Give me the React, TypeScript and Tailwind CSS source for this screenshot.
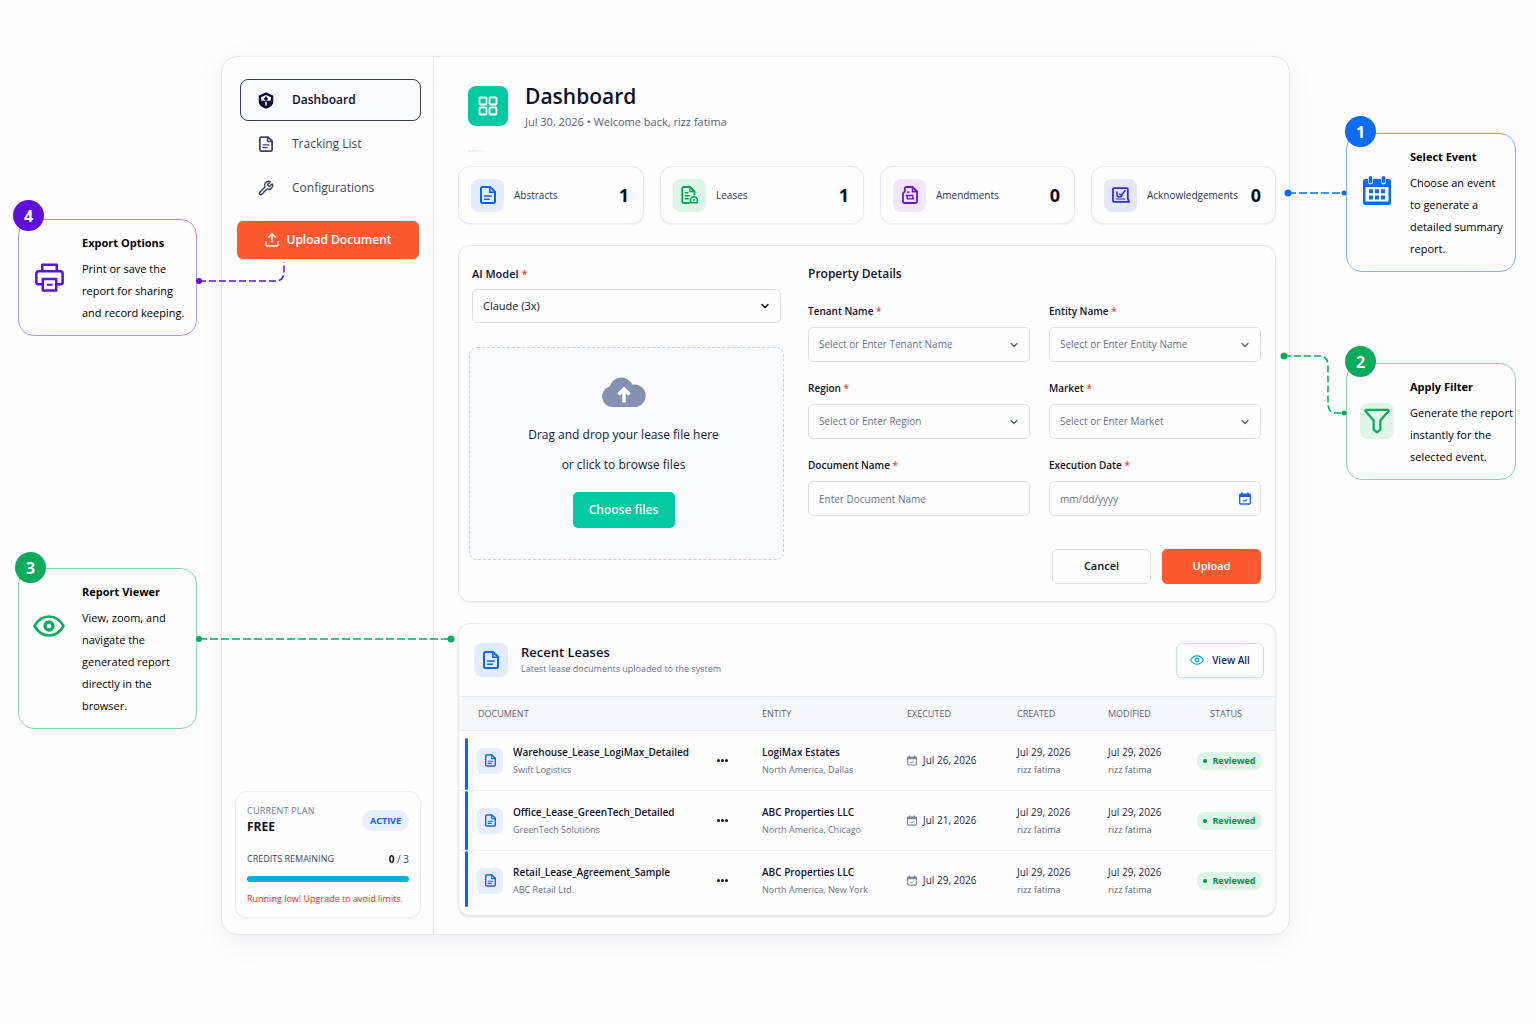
import {Fragment, useState} from "react";
import type {ReactNode} from "react";
import {ChevronDown, Upload, Wrench} from "lucide-react";
import clsx from "clsx";

type IconProps = {
  className?: string;
};

const DocIcon = ({className}: IconProps) => (
  <svg viewBox="0 0 16 18" fill="none" stroke="currentColor" strokeWidth="2" strokeLinejoin="round" strokeLinecap="round" className={className}>
    <path d="M2.500 1h7.600L15 5.800V15.500a1.500 1.500 0 0 1-1.500 1.500h-11A1.500 1.500 0 0 1 1 15.500v-13A1.500 1.500 0 0 1 2.500 1z" />
    <path d="M9.800 1.400v4.800h4.800" strokeWidth="1.600" />
    <path d="M4.600 10h6.600M4.600 13.200h4.600" strokeWidth="1.500" />
  </svg>
);

const ShieldIcon = ({className}: IconProps) => (
  <svg viewBox="0 0 16 17" className={className}>
    <path d="M8 1.100 14.700 4v5.200c0 3-2.600 5.500-6.700 6.900-4.100-1.400-6.700-3.900-6.700-6.900V4z" fill="currentColor" stroke="currentColor" strokeWidth="1.200" strokeLinejoin="round" />
    <path d="M3 5.200 8 2.900l5 2.300-.4 3.600H3.400z" fill="#fff" />
    <path d="M8 4.400v5.800M6.600 6.800 8 5.600l1.400 1.200-1.400 1.400z" stroke="currentColor" strokeWidth="1.200" fill="currentColor" />
    <path d="M8 9.800v3.800" stroke="#fff" strokeWidth="1.500" />
  </svg>
);

const GridIcon = ({className}: IconProps) => (
  <svg viewBox="0 0 20 20" fill="none" stroke="currentColor" strokeWidth="1.800" className={className}>
    <rect x="1.500" y="1.500" width="7" height="7" rx="1" />
    <rect x="11.500" y="1.500" width="7" height="7" rx="1" />
    <rect x="1.500" y="11.500" width="7" height="7" rx="1" />
    <rect x="11.500" y="11.500" width="7" height="7" rx="1" />
  </svg>
);

const LeaseIcon = ({className}: IconProps) => (
  <svg viewBox="0 0 18 18" fill="none" stroke="currentColor" strokeWidth="1.800" strokeLinejoin="round" strokeLinecap="round" className={className}>
    <path d="M8 17H2.500A1.200 1.200 0 0 1 1.300 15.800V2.200A1.200 1.200 0 0 1 2.500 1H9l4.500 4.500v3" />
    <path d="M9 1.500v4h4.300" strokeWidth="1.400" />
    <path d="M4.300 6.800h2.500M4.300 9.800h4M4.300 12.800h3" strokeWidth="1.500" />
    <path d="M9.500 16.800v-2.600a3.400 3.400 0 0 1 6.800 0v2.600z" strokeWidth="1.600" />
    <path d="M12.900 13.500v1.300" strokeWidth="1.500" />
  </svg>
);

const AmendmentIcon = ({className}: IconProps) => (
  <svg viewBox="0 0 16 18" fill="none" stroke="currentColor" strokeWidth="1.800" strokeLinejoin="round" strokeLinecap="round" className={className}>
    <path d="M4.500 1h6L15 5.500v10a1.500 1.500 0 0 1-1.500 1.500h-11A1.500 1.500 0 0 1 1 15.500V7.200L2.800 5.600V2.700A1.700 1.700 0 0 1 4.500 1z" />
    <path d="M10.400 1.500v4.200h4.200" strokeWidth="1.500" />
    <path d="M5.200 9.500h5.600v3.300H5.200zM4.300 9.500h.9M10.800 12.800h1M5.500 6.200h1.500" strokeWidth="1.300" />
  </svg>
);

const AckIcon = ({className}: IconProps) => (
  <svg viewBox="0 0 18 16" fill="none" stroke="currentColor" strokeWidth="1.800" strokeLinejoin="round" strokeLinecap="round" className={className}>
    <path d="M2 1.200h13a.8.800 0 0 1 .8.800v9.500l1.200 3.300H2a1 1 0 0 1-1-1V2.200a1 1 0 0 1 1-1z" />
    <path d="M5 5v2.500a2.500 2.500 0 0 0 5 0M7.500 7.200l1.800 1 3.700-4.500" strokeWidth="1.500" />
    <path d="M4 12h9" strokeWidth="1" />
  </svg>
);

const CloudIcon = ({className}: IconProps) => (
  <svg viewBox="0 0 44 31" className={className}>
    <path d="M10.500 31a10.400 10.400 0 0 1-2.800-20.400A12 12 0 0 1 30.300 8.600 11.300 11.300 0 1 1 32.700 31z" fill="#8490b0" />
    <path d="M22 26.500V14M16.500 18.500 22 13l5.500 5.500" fill="none" stroke="#fff" strokeWidth="3.600" />
  </svg>
);

const SmallCalendarIcon = ({className}: IconProps) => (
  <svg viewBox="0 0 12 13" className={className}>
    <path d="M1.600 2.200h8.800a.9.900 0 0 1 .9.900v8a.9.900 0 0 1-.9.900H1.600a.9.900 0 0 1-.9-.9v-8a.9.900 0 0 1 .9-.9z" fill="none" stroke="currentColor" strokeWidth="1.300" />
    <path d="M.7 2.200h10.600v2.900H.7zM2.300.5h1.600v2H2.300zM8.100.5h1.600v2H8.100z" fill="currentColor" />
    <path d="m3.800 8.600 1.700.6 2.800-1.600" fill="none" stroke="currentColor" strokeWidth="1.200" />
  </svg>
);

const BigCalendarIcon = ({className}: IconProps) => (
  <svg viewBox="0 0 28 30" className={className}>
    <path d="M2.500 3h23A2.500 2.500 0 0 1 28 5.500v21a2.500 2.500 0 0 1-2.500 2.500h-23A2.500 2.500 0 0 1 0 26.500v-21A2.500 2.500 0 0 1 2.500 3zM2.500 11v14.500h23V11z" fill="currentColor" fillRule="evenodd" />
    <path d="M7.500 3v3M20.500 3v3" stroke="#fff" strokeWidth="4.800" strokeLinecap="round" />
    <path d="M7.500 1.900V5.500M20.500 1.900V5.500" stroke="currentColor" strokeWidth="3.600" strokeLinecap="round" />
    <path d="M6 13.200h4v4H6zM12 13.200h4v4h-4zM18 13.200h4v4h-4zM6 19.500h4v4H6zM12 19.500h4v4h-4zM18 19.500h4v4h-4z" fill="currentColor" />
  </svg>
);

const FunnelIcon = ({className}: IconProps) => (
  <svg viewBox="0 0 28 28" fill="none" stroke="currentColor" strokeWidth="2.400" strokeLinejoin="round" className={className}>
    <path d="M2.400 2h23.200c.8 0 1.200.8.700 1.500L17.600 13.500v9.700L14 26.200l-3.600-3V13.500L1.700 3.500C1.200 2.800 1.600 2 2.400 2z" />
  </svg>
);

const EyeIcon = ({className}: IconProps) => (
  <svg viewBox="0 0 32 22" fill="none" stroke="currentColor" strokeWidth="2.600" strokeLinejoin="round" className={className}>
    <path d="M1.500 11C5 4.800 10.200 1.500 16 1.500S27 4.800 30.500 11C27 17.200 21.800 20.500 16 20.500S5 17.200 1.500 11z" />
    <circle cx="16" cy="11" r="4" strokeWidth="3.400" />
  </svg>
);

const PrinterIcon = ({className}: IconProps) => (
  <svg viewBox="0 0 28 28" fill="none" stroke="currentColor" strokeWidth="2.400" strokeLinejoin="round" className={className}>
    <path d="M7 8V1.800h14V8" />
    <path d="M7.500 20.500H3A1.600 1.600 0 0 1 1.300 19V10.500A2.500 2.500 0 0 1 3.800 8h20.400a2.500 2.500 0 0 1 2.500 2.500V19a1.600 1.600 0 0 1-1.600 1.500h-4.500" />
    <path d="M7.500 15.500h13v11h-13z" />
    <path d="M11.500 21h5.500" strokeWidth="2" />
  </svg>
);

type CalloutProps = {
  step: number;
  title: string;
  text: string;
  icon: ReactNode;
  connector: ReactNode;
  borderClass: string;
  badgeClass: string;
};

const Callout = ({step, title, text, icon, connector, borderClass, badgeClass}: CalloutProps) => (
  <section className={clsx("relative flex gap-[15px] rounded-2xl border bg-[#fefefe] pt-3 pb-[11px] pl-3", borderClass)}>
    <span className={clsx("absolute flex size-[31px] items-center justify-center rounded-full text-base font-bold text-white", badgeClass)}>
      {step}
    </span>
    <div className="flex h-[90px] w-9 shrink-0 items-center justify-center">{icon}</div>
    <div className="min-w-0 flex-1 text-black">
      <h3 className="text-[11px] leading-[22px] font-bold">{title}</h3>
      <p className="mt-1 text-[11px] leading-[22px] whitespace-pre-line">{text}</p>
    </div>
    {connector}
  </section>
);

const navItems = [
  {label: "Dashboard", icon: <ShieldIcon className="h-[17px] w-4" />},
  {label: "Tracking List", icon: <DocIcon className="h-4 w-[14px]" />},
  {label: "Configurations", icon: <Wrench className="size-4" strokeWidth={2.2} />},
];

const stats = [
  {label: "Abstracts", value: 1, tile: "bg-[#e3ebfe] text-[#0b66f5]", icon: <DocIcon className="h-[18px] w-4" />},
  {label: "Leases", value: 1, tile: "bg-[#dcf5e6] text-[#0a9f56]", icon: <LeaseIcon className="size-[18px]" />},
  {label: "Amendments", value: 0, tile: "bg-[#efe6fd] text-[#6a11e0]", icon: <AmendmentIcon className="h-[18px] w-4" />},
  {label: "Acknowledgements", value: 0, tile: "bg-[#e6e6fe] text-[#3029ee]", icon: <AckIcon className="h-4 w-[18px]" />},
];

const fields = [
  {id: "tenant", label: "Tenant Name", placeholder: "Select or Enter Tenant Name", kind: "select"},
  {id: "entity", label: "Entity Name", placeholder: "Select or Enter Entity Name", kind: "select"},
  {id: "region", label: "Region", placeholder: "Select or Enter Region", kind: "select"},
  {id: "market", label: "Market", placeholder: "Select or Enter Market", kind: "select"},
  {id: "document", label: "Document Name", placeholder: "Enter Document Name", kind: "text"},
  {id: "execution", label: "Execution Date", placeholder: "mm/dd/yyyy", kind: "date"},
];

const leases = [
  {name: "Warehouse_Lease_LogiMax_Detailed", tenant: "Swift Logistics", entity: "LogiMax Estates", place: "North America, Dallas", executed: "Jul 26, 2026"},
  {name: "Office_Lease_GreenTech_Detailed", tenant: "GreenTech Solutions", entity: "ABC Properties LLC", place: "North America, Chicago", executed: "Jul 21, 2026"},
  {name: "Retail_Lease_Agreement_Sample", tenant: "ABC Retail Ltd.", entity: "ABC Properties LLC", place: "North America, New York", executed: "Jul 29, 2026"},
];

const Required = () => <span className="text-[#fb3b30]"> *</span>;

const SideBar = () => {
  const [active, setActive] = useState("Dashboard");

  return (
    <aside className="flex w-[212px] shrink-0 flex-col border-r border-[#e6e8ef] pt-[22px] pr-3 pb-4 pl-[13px]">
      <nav className="space-y-[2px] pl-[5px]">
        {navItems.map((item) => (
          <a
            key={item.label}
            href="#"
            onClick={() => setActive(item.label)}
            className={clsx(
              "flex h-[42px] items-center rounded-lg border pl-4 text-xs",
              active === item.label ? "border-[#3a4152] bg-[#f8f9fd] font-semibold text-[#0b1030]" : "border-transparent text-[#3c4463]"
            )}
          >
            <span className="flex w-[18px] justify-center">{item.icon}</span>
            <span className="ml-[17px]">{item.label}</span>
          </a>
        ))}
      </nav>
      <button type="button" className="mx-[2px] mt-3 flex h-[38px] items-center justify-center gap-[6px] rounded-md bg-[#ff5a2f] text-xs font-semibold text-white">
        <Upload className="size-4" />
        Upload Document
      </button>

      <div className="mt-auto rounded-xl border border-[#eceef3] bg-[#fefefe] px-[11px] pt-3 pb-[11px] shadow-xs">
        <div className="flex items-center justify-between">
          <div>
            <p className="text-[9px] leading-[14px] tracking-wide text-[#6f7797]">CURRENT PLAN</p>
            <p className="text-xs leading-[18px] font-bold text-[#0b1030]">FREE</p>
          </div>
          <span className="rounded-full bg-[#e8effe] px-2 text-[9px] leading-[21px] font-bold text-[#0b66f5]">ACTIVE</span>
        </div>
        <div className="mt-[14px] flex items-center justify-between text-[9px] leading-[18px] text-[#3c4463]">
          <span>CREDITS REMAINING</span>
          <span className="text-[10px]">
            <b className="text-[#0b1030]">0</b> / 3
          </span>
        </div>
        <div className="mt-2 h-[6px] rounded-full bg-[#06b0db]" />
        <p className="mt-[10px] text-[9px] leading-[14px] text-[#fb2c22]">Running low! Upgrade to avoid limits.</p>
      </div>
    </aside>
  );
};

const StatCards = () => (
  <div className="mt-[14px] grid grid-cols-[186fr_204fr_195fr_185fr] gap-4">
    {stats.map((stat) => (
      <div key={stat.label} className="flex h-[58px] items-center rounded-xl border border-[#e8eaf1] bg-[#fefefe] pr-[14px] pl-3 shadow-xs">
        <span className={clsx("flex size-[33px] shrink-0 items-center justify-center rounded-lg", stat.tile)}>{stat.icon}</span>
        <span className="ml-[10px] text-[10px] text-[#2b3355]">{stat.label}</span>
        <span className="ml-auto text-lg font-bold text-[#080d28]">{stat.value}</span>
      </div>
    ))}
  </div>
);

const controlClass = "h-[35px] w-full appearance-none rounded-[5px] border border-[#dfe1ea] bg-[#fefefe] px-[10px] text-[10px] text-[#69718f] placeholder:text-[#69718f]";

const UploadForm = () => (
  <form className="mt-[21px] grid grid-cols-[326fr_453fr] gap-[13px] rounded-xl border border-[#e8eaf1] bg-[#fefefe] pt-[17px] pr-[14px] pb-[17px] pl-[10px] shadow-xs">
    <div className="pr-[11px]">
      <div className="px-[3px]">
        <label htmlFor="model" className="block text-[11px] leading-[21px] font-semibold text-[#0b1030]">
          AI Model<Required />
        </label>
        <div className="relative mt-[5px]">
          <select id="model" className="h-[34px] w-full appearance-none rounded-[5px] border border-[#dfe1ea] bg-[#fefefe] px-[10px] text-[11px] text-[#0b1030]">
            <option>Claude (3x)</option>
          </select>
          <ChevronDown className="pointer-events-none absolute top-[11px] right-[10px] size-3 text-[#0b1030]" strokeWidth={3} />
        </div>
      </div>
      <div className="mt-6 flex h-[213px] flex-col items-center rounded-lg border border-dashed border-[#cdd2e0] bg-[#f9fafd] pt-7 pr-[6px] text-xs text-[#141a3a]">
        <CloudIcon className="h-[31px] w-11" />
        <label htmlFor="files" className="mt-[13px] text-center leading-[30px]">
          Drag and drop your lease file here
          <br />
          or click to browse files
        </label>
        <input id="files" type="file" className="sr-only" />
        <button type="button" className="mt-3 h-9 w-[102px] rounded-[5px] bg-[#05c9a3] text-xs font-semibold text-white">
          Choose files
        </button>
      </div>
    </div>

    <div>
      <h2 className="text-xs leading-[22px] font-semibold text-[#0b1030]">Property Details</h2>
      <div className="mt-4 grid grid-cols-[222fr_212fr] gap-x-[19px] gap-y-4">
        {fields.map((field) => (
          <div key={field.id}>
            <label htmlFor={field.id} className="block text-[10px] leading-5 font-semibold text-[#0b1030]">
              {field.label}
              <Required />
            </label>
            <div className="relative mt-[6px]">
              {field.kind === "select" ? (
                <Fragment>
                  <select id={field.id} className={controlClass}>
                    <option>{field.placeholder}</option>
                  </select>
                  <ChevronDown className="pointer-events-none absolute top-3 right-[10px] size-3 text-[#545d7f]" strokeWidth={2.5} />
                </Fragment>
              ) : (
                <input id={field.id} type="text" placeholder={field.placeholder} className={controlClass} />
              )}
              {field.kind === "date" && <SmallCalendarIcon className="absolute top-[11px] right-[10px] h-[13px] w-3 text-[#0b66f5]" />}
            </div>
          </div>
        ))}
      </div>
      <div className="mt-[33px] flex justify-end gap-[11px] text-[11px] font-semibold">
        <button type="button" className="h-[35px] w-[99px] rounded-[5px] border border-[#dfe1ea] bg-[#fefefe] text-[#0b1030]">
          Cancel
        </button>
        <button type="submit" className="h-[35px] w-[99px] rounded-[5px] bg-[#ff5a2f] text-white">
          Upload
        </button>
      </div>
    </div>
  </form>
);

const Stamp = () => (
  <Fragment>
    <p className="text-[10px] leading-[17px] text-[#1d2447]">Jul 29, 2026</p>
    <p className="text-[9px] leading-[17px] text-[#565e80]">rizz fatima</p>
  </Fragment>
);

const RecentLeases = () => (
  <section className="mt-[21px] rounded-xl border border-[#e8eaf1] bg-[#fefefe] pb-1 shadow-sm">
    <div className="flex h-[72px] items-center pr-[11px] pl-[15px]">
      <span className="flex size-[34px] items-center justify-center rounded-lg bg-[#e3ebfe] text-[#0b66f5]">
        <DocIcon className="h-[18px] w-4" />
      </span>
      <div className="ml-[13px]">
        <h2 className="text-[13px] leading-[18px] font-semibold text-[#0b1030]">Recent Leases</h2>
        <p className="text-[9px] leading-4 text-[#69718f]">Latest lease documents uploaded to the system</p>
      </div>
      <button type="button" className="ml-auto flex h-[35px] w-[88px] items-center justify-center gap-2 rounded-md border border-[#bfe6f3] bg-[#fefefe] text-[10px] font-semibold text-[#16275a] shadow-xs">
        <EyeIcon className="h-[10px] w-[14px] text-[#06a9cf]" />
        View All
      </button>
    </div>
    <table className="w-full table-fixed text-left">
      <thead className="border-y border-[#e8eaf1] bg-[#f6f7fa] text-[9px] text-[#5a6284]">
        <tr className="h-[34px]">
          <th className="w-[303px] pl-[19px] font-medium">DOCUMENT</th>
          <th className="w-[145px] font-medium">ENTITY</th>
          <th className="w-[110px] font-medium">EXECUTED</th>
          <th className="w-[91px] font-medium">CREATED</th>
          <th className="w-[89px] font-medium">MODIFIED</th>
          <th className="w-[78px] pl-[13px] font-medium">STATUS</th>
        </tr>
      </thead>
      <tbody>
        {leases.map((lease, idx) => (
          <tr key={lease.name} className="h-[60px] border-b border-[#f0f1f5] last:border-b-0">
            <td className="relative">
              <span
                className={clsx(
                  "absolute left-[6px] w-[3px] rounded-full bg-[#0b66f5]",
                  idx === 0 ? "top-[7px]" : "top-0",
                  idx === leases.length - 1 ? "bottom-1" : "bottom-0"
                )}
              />
              <div className="flex items-center pr-[34px] pl-[18px]">
                <span className="flex size-[26px] shrink-0 items-center justify-center rounded-md bg-[#e5edfe] text-[#0b66f5]">
                  <DocIcon className="h-[13px] w-[11px]" />
                </span>
                <div className="ml-[10px]">
                  <p className="text-[10px] leading-[17px] font-semibold text-[#0b1030]">{lease.name}</p>
                  <p className="text-[9px] leading-[17px] text-[#69718f]">{lease.tenant}</p>
                </div>
                <button type="button" aria-label="More" className="ml-auto flex gap-px text-[#0b1030]">
                  <span className="size-[3px] rounded-full bg-current" />
                  <span className="size-[3px] rounded-full bg-current" />
                  <span className="size-[3px] rounded-full bg-current" />
                </button>
              </div>
            </td>
            <td>
              <p className="text-[10px] leading-[17px] font-semibold text-[#0b1030]">{lease.entity}</p>
              <p className="text-[9px] leading-[17px] text-[#69718f]">{lease.place}</p>
            </td>
            <td>
              <div className="flex items-center gap-[6px] text-[10px] text-[#1d2447]">
                <SmallCalendarIcon className="h-[11px] w-[10px] text-[#7a83a6]" />
                {lease.executed}
              </div>
            </td>
            <td>
              <Stamp />
            </td>
            <td>
              <Stamp />
            </td>
            <td>
              <span className="flex h-[18px] w-[65px] items-center justify-center gap-[5px] rounded-lg bg-[#dcf5e6] text-[9px] font-bold text-[#0a9350]">
                <span className="size-1 rounded-full bg-current" />
                Reviewed
              </span>
            </td>
          </tr>
        ))}
      </tbody>
    </table>
  </section>
);

const App = () => {
  return (
    <div className="grid min-h-screen grid-cols-[221px_minmax(0,1fr)_246px] bg-[#fdfdfe] font-['Open_Sans','Noto_Sans',sans-serif]">
      <div className="relative z-10 flex flex-col gap-[232px] pt-[219px] pr-6 pl-[18px]">
        <Callout
          step={4}
          title="Export Options"
          text={"Print or save the\nreport for sharing\nand record keeping."}
          borderClass="border-[#b891f2]"
          badgeClass="-top-[20px] -left-[6px] bg-[#5f10dc]"
          icon={<PrinterIcon className="size-[29px] text-[#5f10dc]" />}
          connector={
            <svg viewBox="0 0 92 24" className="absolute top-[41px] left-full h-6 w-[92px] text-[#5f10dc]" fill="none">
              <circle cx="3" cy="20" r="3" fill="currentColor" />
              <path d="M3 20h76q9 0 9-9V1" stroke="currentColor" strokeWidth="1.500" strokeDasharray="7 3" />
            </svg>
          }
        />
        <Callout
          step={3}
          title="Report Viewer"
          text={"View, zoom, and\nnavigate the\ngenerated report\ndirectly in the\nbrowser."}
          borderClass="border-[#84d8ac]"
          badgeClass="-top-[17px] -left-1 bg-[#0aab5c]"
          icon={<EyeIcon className="h-[22px] w-8 text-[#0aab5c]" />}
          connector={
            <svg viewBox="0 0 260 10" className="absolute top-[65px] left-full h-[10px] w-[260px] text-[#0aab5c]" fill="none">
              <circle cx="3" cy="5" r="3" fill="currentColor" />
              <path d="M3 5h252" stroke="currentColor" strokeWidth="1.500" strokeDasharray="8 3" />
              <circle cx="255" cy="5" r="3.500" fill="currentColor" />
            </svg>
          }
        />
      </div>

      <div className="mt-14 mb-[89px] flex rounded-2xl border border-[#e4e6ee] bg-[#fefefe] shadow-[0_8px_30px_rgba(15,23,42,0.06)]">
        <SideBar />
        <main className="min-w-0 flex-1 pt-[25px] pr-[13px] pb-[18px] pl-6">
          <header className="flex items-center pl-[10px]">
            <span className="flex size-10 items-center justify-center rounded-lg bg-[#05c9a3] text-white">
              <GridIcon className="size-5" />
            </span>
            <div className="ml-[17px]">
              <h1 className="text-[21px] leading-7 font-semibold text-[#0b1030]">Dashboard</h1>
              <p className="mt-1 text-[11px] leading-4 text-[#565e80]">Jul 30, 2026 • Welcome back, rizz fatima</p>
            </div>
          </header>
          <div className="mt-5 ml-[10px] h-[2px] w-6 bg-linear-to-r from-[#e9eef4] to-transparent" />
          <StatCards />
          <UploadForm />
          <RecentLeases />
        </main>
      </div>

      <div className="relative z-10 flex flex-col gap-[91px] pt-[133px] pr-5 pl-14">
        <Callout
          step={1}
          title="Select Event"
          text={"Choose an event\nto generate a\ndetailed summary\nreport."}
          borderClass="border-[#7db2f8]"
          badgeClass="-top-[18px] -left-[2px] bg-[#0a6cf3]"
          icon={<BigCalendarIcon className="h-[30px] w-7 text-[#0a6cf3]" />}
          connector={
            <svg viewBox="0 0 64 10" className="absolute top-[54px] right-full h-[10px] w-16 text-[#0a6cf3]" fill="none">
              <circle cx="5" cy="5" r="3.500" fill="currentColor" />
              <path d="M5 5h56" stroke="currentColor" strokeWidth="1.500" strokeDasharray="8 3" />
              <circle cx="61" cy="5" r="2.500" fill="currentColor" />
            </svg>
          }
        />
        <Callout
          step={2}
          title="Apply Filter"
          text={"Generate the report\ninstantly for the\nselected event."}
          borderClass="border-[#84d8ac]"
          badgeClass="-top-[18px] -left-[2px] bg-[#0aab5c]"
          icon={
            <span className="flex h-9 w-[34px] items-center justify-center rounded-lg bg-[#dff5e8] text-[#0aab5c]">
              <FunnelIcon className="size-[26px]" />
            </span>
          }
          connector={
            <svg viewBox="0 0 68 68" className="absolute -top-[13px] right-full size-[68px] text-[#0aab5c]" fill="none">
              <circle cx="5" cy="5" r="3.500" fill="currentColor" />
              <path d="M5 5h35q9 0 9 9v39q0 9 9 9h7" stroke="currentColor" strokeWidth="1.500" strokeDasharray="7 3" />
              <circle cx="65" cy="62" r="2.500" fill="currentColor" />
            </svg>
          }
        />
      </div>
    </div>
  );
};

export default App;
